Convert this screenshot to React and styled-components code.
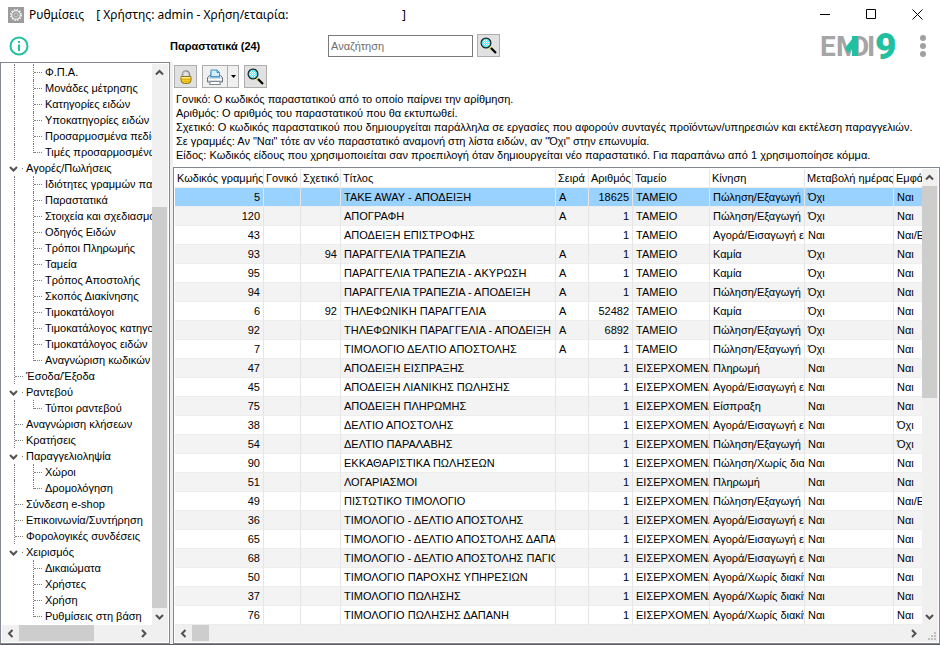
import React, {useState} from 'react';
import styled, {createGlobalStyle, css} from 'styled-components';

const tree = [
    {label: 'Φ.Π.Α.', level: 2, outer: true},
    {label: 'Μονάδες μέτρησης', level: 2, outer: true},
    {label: 'Κατηγορίες ειδών', level: 2, outer: true},
    {label: 'Υποκατηγορίες ειδών', level: 2, outer: true},
    {label: 'Προσαρμοσμένα πεδία', level: 2, outer: true},
    {label: 'Τιμές προσαρμοσμένων', level: 2, outer: true, last: true},
    {label: 'Αγορές/Πωλήσεις', level: 1, open: true},
    {label: 'Ιδιότητες γραμμών παραστατικών', level: 2, outer: true},
    {label: 'Παραστατικά', level: 2, outer: true},
    {label: 'Στοιχεία και σχεδιασμός', level: 2, outer: true},
    {label: 'Οδηγός Ειδών', level: 2, outer: true},
    {label: 'Τρόποι Πληρωμής', level: 2, outer: true},
    {label: 'Ταμεία', level: 2, outer: true},
    {label: 'Τρόπος Αποστολής', level: 2, outer: true},
    {label: 'Σκοπός Διακίνησης', level: 2, outer: true},
    {label: 'Τιμοκατάλογοι', level: 2, outer: true},
    {label: 'Τιμοκατάλογος κατηγοριών', level: 2, outer: true},
    {label: 'Τιμοκατάλογος ειδών', level: 2, outer: true},
    {label: 'Αναγνώριση κωδικών', level: 2, outer: true, last: true},
    {label: 'Έσοδα/Έξοδα', level: 1},
    {label: 'Ραντεβού', level: 1, open: true},
    {label: 'Τύποι ραντεβού', level: 2, outer: true, last: true},
    {label: 'Αναγνώριση κλήσεων', level: 1},
    {label: 'Κρατήσεις', level: 1},
    {label: 'Παραγγελιοληψία', level: 1, open: true},
    {label: 'Χώροι', level: 2, outer: true},
    {label: 'Δρομολόγηση', level: 2, outer: true, last: true},
    {label: 'Σύνδεση e-shop', level: 1},
    {label: 'Επικοινωνία/Συντήρηση', level: 1},
    {label: 'Φορολογικές συνδέσεις', level: 1},
    {label: 'Χειρισμός', level: 1, open: true},
    {label: 'Δικαιώματα', level: 2},
    {label: 'Χρήστες', level: 2},
    {label: 'Χρήση', level: 2},
    {label: 'Ρυθμίσεις στη βάση', level: 2, last: true},
];

const columns = [
    {title: 'Κωδικός γραμμής', width: 89, right: true},
    {title: 'Γονικό', width: 37, right: true},
    {title: 'Σχετικό', width: 40, right: true},
    {title: 'Τίτλος', width: 215},
    {title: 'Σειρά', width: 33},
    {title: 'Αριθμός', width: 44, right: true},
    {title: 'Ταμείο', width: 77},
    {title: 'Κίνηση', width: 95},
    {title: 'Μεταβολή ημέρας', width: 89},
    {title: 'Εμφάνιση'},
];

const OUT = 'Πώληση/Εξαγωγή ειδών';
const IN = 'Αγορά/Εισαγωγή ειδών';
const BUY = 'Αγορά/Χωρίς διακίνηση';

const rows = [
    [5, '', '', 'TAKE AWAY - ΑΠΟΔΕΙΞΗ', 'Α', 18625, 'ΤΑΜΕΙΟ', OUT, 'Όχι', 'Ναι'],
    [120, '', '', 'ΑΠΟΓΡΑΦΗ', 'Α', 1, 'ΤΑΜΕΙΟ', OUT, 'Όχι', 'Ναι'],
    [43, '', '', 'ΑΠΟΔΕΙΞΗ ΕΠΙΣΤΡΟΦΗΣ', '', 1, 'ΤΑΜΕΙΟ', IN, 'Ναι', 'Ναι/Ε'],
    [93, '', 94, 'ΠΑΡΑΓΓΕΛΙΑ ΤΡΑΠΕΖΙΑ', 'Α', 1, 'ΤΑΜΕΙΟ', 'Καμία', 'Όχι', 'Ναι'],
    [95, '', '', 'ΠΑΡΑΓΓΕΛΙΑ ΤΡΑΠΕΖΙΑ - ΑΚΥΡΩΣΗ', 'Α', 1, 'ΤΑΜΕΙΟ', 'Καμία', 'Όχι', 'Ναι'],
    [94, '', '', 'ΠΑΡΑΓΓΕΛΙΑ ΤΡΑΠΕΖΙΑ - ΑΠΟΔΕΙΞΗ', 'Α', 1, 'ΤΑΜΕΙΟ', OUT, 'Όχι', 'Ναι'],
    [6, '', 92, 'ΤΗΛΕΦΩΝΙΚΗ ΠΑΡΑΓΓΕΛΙΑ', 'Α', 52482, 'ΤΑΜΕΙΟ', 'Καμία', 'Όχι', 'Ναι'],
    [92, '', '', 'ΤΗΛΕΦΩΝΙΚΗ ΠΑΡΑΓΓΕΛΙΑ - ΑΠΟΔΕΙΞΗ', 'Α', 6892, 'ΤΑΜΕΙΟ', OUT, 'Όχι', 'Ναι'],
    [7, '', '', 'ΤΙΜΟΛΟΓΙΟ ΔΕΛΤΙΟ ΑΠΟΣΤΟΛΗΣ', 'Α', 1, 'ΤΑΜΕΙΟ', OUT, 'Όχι', 'Ναι'],
    [47, '', '', 'ΑΠΟΔΕΙΞΗ ΕΙΣΠΡΑΞΗΣ', '', 1, 'ΕΙΣΕΡΧΟΜΕΝΑ', 'Πληρωμή', 'Ναι', 'Ναι'],
    [45, '', '', 'ΑΠΟΔΕΙΞΗ ΛΙΑΝΙΚΗΣ ΠΩΛΗΣΗΣ', '', 1, 'ΕΙΣΕΡΧΟΜΕΝΑ', IN, 'Ναι', 'Ναι'],
    [75, '', '', 'ΑΠΟΔΕΙΞΗ ΠΛΗΡΩΜΗΣ', '', 1, 'ΕΙΣΕΡΧΟΜΕΝΑ', 'Είσπραξη', 'Ναι', 'Ναι'],
    [38, '', '', 'ΔΕΛΤΙΟ ΑΠΟΣΤΟΛΗΣ', '', 1, 'ΕΙΣΕΡΧΟΜΕΝΑ', IN, 'Ναι', 'Όχι'],
    [54, '', '', 'ΔΕΛΤΙΟ ΠΑΡΑΛΑΒΗΣ', '', 1, 'ΕΙΣΕΡΧΟΜΕΝΑ', OUT, 'Ναι', 'Όχι'],
    [90, '', '', 'ΕΚΚΑΘΑΡΙΣΤΙΚΑ ΠΩΛΗΣΕΩΝ', '', 1, 'ΕΙΣΕΡΧΟΜΕΝΑ', 'Πώληση/Χωρίς διακίνηση', 'Ναι', 'Ναι'],
    [51, '', '', 'ΛΟΓΑΡΙΑΣΜΟΙ', '', 1, 'ΕΙΣΕΡΧΟΜΕΝΑ', 'Πληρωμή', 'Ναι', 'Ναι'],
    [49, '', '', 'ΠΙΣΤΩΤΙΚΟ ΤΙΜΟΛΟΓΙΟ', '', 1, 'ΕΙΣΕΡΧΟΜΕΝΑ', OUT, 'Ναι', 'Ναι/Ε'],
    [36, '', '', 'ΤΙΜΟΛΟΓΙΟ - ΔΕΛΤΙΟ ΑΠΟΣΤΟΛΗΣ', '', 1, 'ΕΙΣΕΡΧΟΜΕΝΑ', IN, 'Ναι', 'Ναι'],
    [65, '', '', 'ΤΙΜΟΛΟΓΙΟ - ΔΕΛΤΙΟ ΑΠΟΣΤΟΛΗΣ ΔΑΠΑΝΗ', '', 1, 'ΕΙΣΕΡΧΟΜΕΝΑ', IN, 'Ναι', 'Ναι'],
    [68, '', '', 'ΤΙΜΟΛΟΓΙΟ - ΔΕΛΤΙΟ ΑΠΟΣΤΟΛΗΣ ΠΑΓΙΟ', '', 1, 'ΕΙΣΕΡΧΟΜΕΝΑ', IN, 'Ναι', 'Ναι'],
    [50, '', '', 'ΤΙΜΟΛΟΓΙΟ ΠΑΡΟΧΗΣ ΥΠΗΡΕΣΙΩΝ', '', 1, 'ΕΙΣΕΡΧΟΜΕΝΑ', BUY, 'Ναι', 'Ναι'],
    [37, '', '', 'ΤΙΜΟΛΟΓΙΟ ΠΩΛΗΣΗΣ', '', 1, 'ΕΙΣΕΡΧΟΜΕΝΑ', BUY, 'Ναι', 'Ναι'],
    [76, '', '', 'ΤΙΜΟΛΟΓΙΟ ΠΩΛΗΣΗΣ ΔΑΠΑΝΗ', '', 1, 'ΕΙΣΕΡΧΟΜΕΝΑ', BUY, 'Ναι', 'Ναι'],
];

const arrows = {
    up: 'M1 6.5 L4.5 3 L8 6.5',
    down: 'M1 3 L4.5 6.5 L8 3',
    left: 'M6.5 1 L3 4.5 L6.5 8',
    right: 'M3 1 L6.5 4.5 L3 8',
};

function Arrow({dir}) {
    return (
        <svg width="9" height="9" viewBox="0 0 9 9" fill="none" stroke="#505050" strokeWidth="2">
            <path d={arrows[dir]} />
        </svg>
    )
}

function Magnifier() {
    return (
        <svg width="17" height="17" viewBox="0 0 17 17">
            <circle cx="6" cy="6" r="4.9" fill="#5fe6ee" stroke="#222" strokeWidth="1.2" />
            <path d="M4 3.5h1M6 3.5h1M3 4.5h1M5 4.5h1M7 4.5h1M4 5.5h1M6 5.5h1M8 5.5h1M3 6.5h1M5 6.5h1M7 6.5h1M4 7.5h1M6 7.5h1M8 7.5h1M5 8.5h1M7 8.5h1" stroke="#fff" />
            <path d="M9.5 10.5l1.500 1.500" stroke="#e8dc3c" strokeWidth="2.500" />
            <path d="M11 11l5 5" stroke="#000" strokeWidth="2.200" />
        </svg>
    )
}

function Lock() {
    return (
        <svg width="12" height="14" viewBox="0 0 12 14">
            <path d="M2.500 7V4.500a3.500 3.500 0 0 1 7 0V7" fill="none" stroke="#8b8b8b" strokeWidth="1.600" />
            <path d="M3 6V4.500a3 3 0 0 1 3-3" fill="none" stroke="#d0d0d0" strokeWidth=".8" />
            <path d="M1 6.500h10V10q0 3.500-3.500 3.500h-3Q1 13.500 1 10z" fill="#f5cf28" stroke="#8a7020" />
            <path d="M1.500 7.500h9" stroke="#fff2a0" />
            <path d="M2 9.500h8M2.500 11.500h7" stroke="#e6b412" />
        </svg>
    )
}

function Printer() {
    return (
        <svg width="16" height="16" viewBox="0 0 16 16">
            <path d="M4 7.500V1h6l2.500 2.500v4z" fill="#d5ecfb" stroke="#3d8fc9" />
            <path d="M10 1v2.500h2.500" fill="none" stroke="#3d8fc9" />
            <path d="M2.500 6.500h11l2 2V13h-15V8.500z" fill="#d8dce3" stroke="#667180" />
            <path d="M4 3v4.500h8.500V4.500" fill="#d5ecfb" stroke="#3d8fc9" />
            <path d="M3 8h10" stroke="#4b9ad3" />
            <path d="M1 10.500h14" stroke="#fff" />
            <path d="M3.500 12.500h9l1 3h-11z" fill="#fff" stroke="#7c8793" />
        </svg>
    )
}

function GearIcon() {
    return (
        <svg width="16" height="16" viewBox="0 0 16 16">
            <rect width="16" height="16" fill="#9c9c9c" />
            <circle cx="8" cy="8" r="5.300" fill="none" stroke="#fff" strokeWidth="1.300" strokeDasharray="1.400 1.376" />
            <circle cx="8" cy="8" r="4.300" fill="none" stroke="#fff" strokeWidth="1" />
            <circle cx="8" cy="8" r="2" fill="none" stroke="#d8d8d8" strokeWidth=".8" />
        </svg>
    )
}

// the right leg of the M is also the stem of the D
function Logo() {
    return (
        <svg width="78" height="32" viewBox="0 0 78 32" fontFamily="Roboto, 'Liberation Sans', sans-serif" fontWeight="700" fontSize="28" fill="#a5a5a5" role="img" aria-label="EMDI9">
            <text x="-1" y="26">E</text>
            <text x="15" y="26">M</text>
            <text x="30" y="26">D</text>
            <text x="46" y="26">I</text>
            <path d="M32 8L24 18l3 5 5-5z" fill="#20c0a0" />
            <path d="M31 6h6v20h-6z" fill="#20c0a0" />
            <text x="54" y="29" fontSize="37" fontWeight="900" fill="#20c0a0">9</text>
        </svg>
    )
}

function ScrollBar({vertical, before, size, label}) {
    return (
        <Track $vertical={vertical} aria-label={label}>
            <ScrollButton $vertical={vertical} aria-label={vertical ? 'Πάνω' : 'Αριστερά'}>
                <Arrow dir={vertical ? 'up' : 'left'} />
            </ScrollButton>
            <Rail $vertical={vertical} $before={before}>
                <Thumb $vertical={vertical} $size={size} />
            </Rail>
            <ScrollButton $vertical={vertical} aria-label={vertical ? 'Κάτω' : 'Δεξιά'}>
                <Arrow dir={vertical ? 'down' : 'right'} />
            </ScrollButton>
        </Track>
    )
}

function App() {

    const [search, setSearch] = useState('');
    const [selected, setSelected] = useState(0);

  return (
    <Window>
        <GlobalStyle />
        <TitleBar>
            <GearIcon />
            <Caption>
                <span>Ρυθμίσεις</span>
                <span>[ Χρήστης: admin - Χρήση/εταιρία:</span>
            </Caption>
            <CaptionEnd>]</CaptionEnd>
            <WindowButton aria-label="Ελαχιστοποίηση">
                <svg width="11" height="11" stroke="#000"><path d="M0 5.500h10" /></svg>
            </WindowButton>
            <WindowButton aria-label="Μεγιστοποίηση">
                <svg width="11" height="11" stroke="#000" fill="none"><path d="M.5 .5h9v9h-9z" /></svg>
            </WindowButton>
            <WindowButton aria-label="Κλείσιμο">
                <svg width="11" height="11" stroke="#000"><path d="M.5 .5l10 10M10.500 .5l-10 10" /></svg>
            </WindowButton>
        </TitleBar>

        <Header>
            <InfoButton aria-label="Πληροφορίες">
                <svg width="20" height="20" viewBox="0 0 20 20" fill="none" stroke="#20c0a0" strokeWidth="2">
                    <circle cx="10" cy="10" r="8.500" />
                    <path d="M10 8.500V15M10 5v2" />
                </svg>
            </InfoButton>
            <Heading>Παραστατικά (24)</Heading>
            <SearchForm onSubmit={(e) => e.preventDefault()}>
                <SearchInput aria-label="Αναζήτηση" placeholder="Αναζήτηση" value={search} onChange={(e) => setSearch(e.target.value)} />
                <ToolButton aria-label="Εύρεση"><Magnifier /></ToolButton>
            </SearchForm>
            <Logo />
            <MoreButton aria-label="Μενού">
                <svg width="8" height="24" fill="#a0a0a0">
                    <circle cx="4" cy="4" r="3" />
                    <circle cx="4" cy="12" r="3" />
                    <circle cx="4" cy="20" r="3" />
                </svg>
            </MoreButton>
        </Header>

        <Body>
            <Sidebar>
                <PaneTop>
                    <Tree>
                        {tree.map((node) => (
                            <TreeItem key={node.label}>
                                {node.level === 2 && <OuterLine $show={node.outer} />}
                                {node.open
                                    ? <Toggle aria-label={node.label}><Arrow dir="down" /></Toggle>
                                    : <Branch $last={node.last} />}
                                <TreeLabel>{node.label}</TreeLabel>
                            </TreeItem>
                        ))}
                    </Tree>
                    <ScrollBar vertical before={126} label="Κύλιση δέντρου" />
                </PaneTop>
                <PaneBottom>
                    <ScrollBar size={75} label="Οριζόντια κύλιση δέντρου" />
                    <Corner />
                </PaneBottom>
            </Sidebar>

            <Content>
                <Toolbar>
                    <ToolButton aria-label="Κλείδωμα"><Lock /></ToolButton>
                    <Split>
                        <PrintButton aria-label="Εκτύπωση"><Printer /></PrintButton>
                        <DropButton aria-label="Επιλογές εκτύπωσης">
                            <svg width="5" height="3"><path d="M0 0h5L2.500 3z" /></svg>
                        </DropButton>
                    </Split>
                    <ToolButton aria-label="Αναζήτηση"><Magnifier /></ToolButton>
                </Toolbar>
                <Help>
                    <p>Γονικό: Ο κωδικός παραστατικού από το οποίο παίρνει την αρίθμηση.</p>
                    <p>Αριθμός: Ο αριθμός του παραστατικού που θα εκτυπωθεί.</p>
                    <p>Σχετικό: Ο κωδικός παραστατικού που δημιουργείται παράλληλα σε εργασίες που αφορούν συνταγές προϊόντων/υπηρεσιών και εκτέλεση παραγγελιών.</p>
                    <p>Σε γραμμές: Αν "Ναι" τότε αν νέο παραστατικό αναμονή στη λίστα ειδών, αν "Όχι" στην επωνυμία.</p>
                    <p>Είδος: Κωδικός είδους που χρησιμοποιείται σαν προεπιλογή όταν δημιουργείται νέο παραστατικό. Για παραπάνω από 1 χρησιμοποίησε κόμμα.</p>
                </Help>
                <GridPane>
                    <PaneTop>
                        <Grid>
                            <colgroup>
                                {columns.map((col) => <Col key={col.title} $width={col.width} />)}
                            </colgroup>
                            <thead>
                                <tr>
                                    {columns.map((col) => <Th key={col.title}>{col.title}</Th>)}
                                </tr>
                            </thead>
                            <tbody>
                                {rows.map((row, i) => (
                                    <Row key={row[0]} $selected={i === selected} onClick={() => setSelected(i)}>
                                        {row.map((value, c) => (
                                            <Td key={c} $right={columns[c].right}>{value}</Td>
                                        ))}
                                    </Row>
                                ))}
                            </tbody>
                        </Grid>
                        <ScrollBar vertical size={212} label="Κύλιση πίνακα" />
                    </PaneTop>
                    <PaneBottom>
                        <ScrollBar size={17} label="Οριζόντια κύλιση πίνακα" />
                        <Corner>
                            <svg width="9" height="9" fill="#bfbfbf">
                                <path d="M6 0h2v2h-2zM3 3h2v2h-2zM6 3h2v2h-2zM0 6h2v2h-2zM3 6h2v2h-2zM6 6h2v2h-2z" />
                            </svg>
                        </Corner>
                    </PaneBottom>
                </GridPane>
            </Content>
        </Body>
    </Window>
  )
}

const GlobalStyle = createGlobalStyle`
    *{
        box-sizing: border-box;
    }

    body{
        margin: 0;
        background: white;
        color: black;
        font-family: 'Liberation Sans', Arial, sans-serif;
        font-size: 11px;
    }

    button{
        padding: 0;
        border: 0;
        background: none;
        font: inherit;
        display: flex;
        align-items: center;
        justify-content: center;
    }

    svg{
        display: block;
        flex: none;
    }
`

const Window = styled.div`
    display: flex;
    flex-direction: column;
    min-height: 100vh;
    border-bottom: 1px solid #5f5f5f;
`

const TitleBar = styled.div`
    display: flex;
    align-items: center;
    height: 29px;
    padding-left: 8px;
    font-family: 'Noto Sans', 'Open Sans', sans-serif;
    font-size: 12px;
`

const Caption = styled.div`
    display: flex;
    gap: 12px;
    width: 374px;
    padding-left: 5px;
    margin-right: 4px;
    white-space: nowrap;
`

const CaptionEnd = styled.span`
    flex: 1;
`

const WindowButton = styled.button`
    width: 46px;
    height: 29px;
`

const Header = styled.header`
    display: flex;
    align-items: center;
    height: 33px;
    padding: 0 8px 0 9px;
`

const InfoButton = styled.button`
    width: 20px;
    height: 20px;
`

const Heading = styled.h1`
    width: 158px;
    margin: 0 0 0 141px;
    font-size: 11px;
    line-height: 14px;
`

const SearchForm = styled.form`
    display: flex;
    align-items: center;
    gap: 4px;
    flex: 1;
`

const SearchInput = styled.input`
    width: 145px;
    height: 22px;
    padding: 0 2px;
    border: 1px solid #7a7a7a;
    background: white;
    font: inherit;

    &::placeholder{
        color: #6d6d6d;
        opacity: 1;
    }
`

const MoreButton = styled.button`
    width: 18px;
    height: 28px;
    margin-left: 15px;
`

const Body = styled.div`
    display: flex;
    flex: 1;
    gap: 3px;
    background: #f0f0f0;
`

const Sidebar = styled.aside`
    display: flex;
    flex-direction: column;
    width: 170px;
    flex: none;
    padding: 1px;
    border: 1px solid #828790;
    background: white;
`

const PaneTop = styled.div`
    display: flex;
    flex: 1;
    min-width: 0;
`

const PaneBottom = styled.div`
    display: flex;
    background: #f0f0f0;
`

const Tree = styled.ul`
    flex: 1;
    min-width: 0;
    margin: 0;
    padding: 0;
    list-style: none;
    overflow: hidden;
`

const TreeItem = styled.li`
    display: flex;
    height: 16px;
    padding-left: 5px;
    line-height: 16px;
`

const OuterLine = styled.span`
    width: 12px;
    margin: 0 0 0 7px;
    flex: none;
    border-left: 1px dotted ${(props) => props.$show ? '#808080' : 'transparent'};
`

const Branch = styled.span`
    position: relative;
    width: 9px;
    flex: none;
    margin: 0 3px 0 7px;

    &::before{
        content: '';
        position: absolute;
        left: 0;
        top: 0;
        height: ${(props) => props.$last ? '9px' : '16px'};
        border-left: 1px dotted #808080;
    }

    &::after{
        content: '';
        position: absolute;
        left: 1px;
        right: 0;
        top: 8px;
        border-top: 1px dotted #808080;
    }
`

const Toggle = styled.button`
    width: 16px;
    margin-right: 3px;
    flex: none;

    &&{
        justify-content: space-between;
        padding-left: 2px;
    }

    &::after{
        content: '';
        width: 1px;
        height: 1px;
        background: #808080;
    }
`

const TreeLabel = styled.span`
    white-space: nowrap;
`

const Track = styled.div`
    display: flex;
    background: #f0f0f0;
    ${(props) => props.$vertical
        ? css`
            flex-direction: column;
            width: 16px;
            flex: none;
        `
        : css`
            height: 16px;
            flex: 1;
        `}
`

const ScrollButton = styled.button`
    width: ${(props) => props.$vertical ? '15px' : '17px'};
    height: 17px;
    flex: none;
`

const Rail = styled.div`
    display: flex;
    flex: 1;
    flex-direction: ${(props) => props.$vertical ? 'column' : 'row'};
    padding-top: ${(props) => props.$before || 0}px;
`

const Thumb = styled.div`
    background: #cdcdcd;
    flex: ${(props) => props.$size ? `0 0 ${props.$size}px` : '1'};
    margin-right: ${(props) => props.$vertical ? '1px' : '0'};
`

const Corner = styled.div`
    display: flex;
    align-items: flex-end;
    justify-content: flex-end;
    width: 16px;
    height: 17px;
    padding: 1px;
`

const Content = styled.main`
    display: flex;
    flex-direction: column;
    flex: 1;
    min-width: 0;
    background: white;
`

const Toolbar = styled.div`
    display: flex;
    gap: 5px;
    padding: 3px 1px 4px;
`

const ToolButton = styled.button`
    width: 23px;
    height: 23px;

    &&{
        border: 1px solid #adadad;
        background: #e1e1e1;
    }
`

const Split = styled.div`
    display: flex;
    height: 23px;
    border: 1px solid #adadad;
    background: #f0f0f0;
`

const PrintButton = styled.button`
    width: 24px;
`

const DropButton = styled.button`
    width: 11px;

    &&{
        border-left: 1px solid #adadad;
    }
`

const Help = styled.div`
    padding: 0 3px 5px;

    p{
        margin: 0;
        line-height: 14px;
        white-space: nowrap;
    }
`

const GridPane = styled.section`
    display: flex;
    flex-direction: column;
    flex: 1;
    padding: 1px;
    border: 1px solid #828790;
`

const Grid = styled.table`
    flex: 1;
    width: 100%;
    min-width: 0;
    table-layout: fixed;
    border-collapse: separate;
    border-spacing: 0;
    line-height: 14px;
`

const Col = styled.col`
    width: ${(props) => props.$width ? props.$width + 'px' : 'auto'};
`

const cell = css`
    overflow: hidden;
    white-space: nowrap;
    border-right: 1px solid #e5e5e5;
    border-bottom: 1px solid #ededed;

    &:last-child{
        border-right: 0;
    }
`

const Th = styled.th`
    ${cell}
    height: 19px;
    padding: 0 0 0 2px;
    font-weight: normal;
    text-align: left;
`

const Row = styled.tr`
    background: ${(props) => props.$selected ? '#99d1ff' : 'white'};

    &:nth-child(even){
        background: ${(props) => props.$selected ? '#99d1ff' : '#f3f3f3'};
    }
`

const Td = styled.td`
    ${cell}
    height: 19px;
    padding: ${(props) => props.$right ? '0 3px 0 0' : '0 0 0 3px'};
    text-align: ${(props) => props.$right ? 'right' : 'left'};
`

export default App
